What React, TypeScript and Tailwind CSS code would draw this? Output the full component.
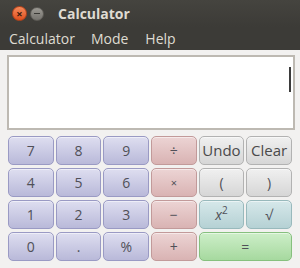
import React from "react";

type Kind = "num" | "op" | "fn" | "pow" | "eq";

const KIND: Record<Kind, string> = {
  num: "border-[#9a9ac4] bg-linear-to-b from-[#dedef0] to-[#b9b9d9]",
  op: "border-[#c29a9a] bg-linear-to-b from-[#ecd4d4] to-[#d9b3b3]",
  fn: "border-[#b2b2b2] bg-linear-to-b from-[#f0f0f0] to-[#d6d6d6]",
  pow: "border-[#98b9bc] bg-linear-to-b from-[#d6e8ea] to-[#b5d1d4]",
  eq: "border-[#86c07e] bg-linear-to-b from-[#cdeec8] to-[#a6d99f]",
};

const KEYS: { label: React.ReactNode; kind: Kind; span?: boolean }[] = [
  { label: "7", kind: "num" },
  { label: "8", kind: "num" },
  { label: "9", kind: "num" },
  { label: "÷", kind: "op" },
  { label: "Undo", kind: "fn" },
  { label: "Clear", kind: "fn" },
  { label: "4", kind: "num" },
  { label: "5", kind: "num" },
  { label: "6", kind: "num" },
  { label: <span className="text-[11px]">×</span>, kind: "op" },
  { label: "(", kind: "fn" },
  { label: ")", kind: "fn" },
  { label: "1", kind: "num" },
  { label: "2", kind: "num" },
  { label: "3", kind: "num" },
  { label: "−", kind: "op" },
  {
    label: (
      <span className="italic">
        x<sup className="text-[10px] not-italic -top-[0.6em]">2</sup>
      </span>
    ),
    kind: "pow",
  },
  { label: "√", kind: "pow" },
  { label: "0", kind: "num" },
  { label: ".", kind: "num" },
  { label: "%", kind: "num" },
  { label: "+", kind: "op" },
  { label: "=", kind: "eq", span: true },
];

export default function App() {
  return (
    <div className="w-[300px] h-[268px] overflow-hidden bg-[#f2f1f0] font-['Open_Sans',sans-serif] flex flex-col">
      {/* title bar */}
      <div className="h-[27px] bg-linear-to-b from-[#45443f] to-[#3c3b37] flex items-center pl-[12px]">
        <div className="w-[15px] h-[15px] rounded-full bg-linear-to-b from-[#f58a5a] to-[#df4e1b] border border-[#b8421a] flex items-center justify-center text-[#3a1a0c] text-[11px] leading-none font-bold">
          ×
        </div>
        <div className="ml-[3px] w-[14px] h-[14px] rounded-full bg-linear-to-b from-[#9b9993] to-[#75736e] border border-[#5c5a55] flex items-center justify-center">
          <div className="w-[6px] h-[1.5px] bg-[#3a3935]" />
        </div>
        <span className="ml-[14px] text-[14px] font-bold text-[#dfdbd2] leading-none">Calculator</span>
      </div>

      {/* menu bar */}
      <div className="h-[23px] bg-[#3c3b37] flex items-center pl-[9px] gap-[16px] text-[14px] text-[#dfdbd2] leading-none">
        <span>Calculator</span>
        <span>Mode</span>
        <span className="ml-[1px]">Help</span>
      </div>

      {/* display */}
      <div className="mt-[5px] ml-[7px] w-[288px] h-[75px] border-2 border-[#bdb9b2] bg-white flex justify-end items-start pt-[10px] pr-[2px]">
        <div className="w-[2px] h-[25px] bg-[#3b3b3b]" />
      </div>

      {/* keypad */}
      <div className="mt-[6px] ml-[8px] w-[284px] grid grid-cols-6 gap-x-[2px] gap-y-[3px] auto-rows-[29px]">
        {KEYS.map((k, i) => (
          <button
            key={i}
            className={`${KIND[k.kind]} ${k.span ? "col-span-2" : ""} border rounded-[5px] flex items-center justify-center text-[14px] text-[#505058] leading-none shadow-[inset_0_1px_0_rgba(255,255,255,0.5)]`}
          >
            {k.kind === "fn" && typeof k.label === "string" && k.label.length > 1 ? (
              <span className="text-[15px] text-[#4a4a4a]">{k.label}</span>
            ) : (
              k.label
            )}
          </button>
        ))}
      </div>
    </div>
  );
}
